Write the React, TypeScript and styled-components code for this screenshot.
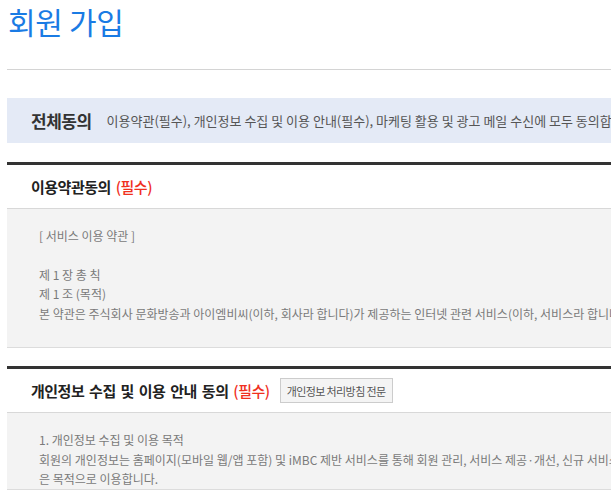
import React from 'react'
import styled, { createGlobalStyle } from 'styled-components'

const Global = createGlobalStyle`
  html, body { margin: 0; padding: 0; background: #fff; overflow: hidden; }
  body { font-family: "Noto Sans CJK KR", "Noto Sans", sans-serif; }
`

const Page = styled.div`
  width: 960px;
  padding-left: 7px;
`

const Title = styled.h1`
  margin: 0;
  padding: 0 0 0 1px;
  font-size: 30px;
  line-height: 42px;
  font-weight: 400;
  color: #1a7be4;
  letter-spacing: -0.3px;
`

const Rule = styled.hr`
  margin: 27px 0 0;
  border: 0;
  border-top: 1px solid #d4d4d4;
`

const AllAgree = styled.div`
  margin-top: 28px;
  height: 45px;
  display: flex;
  align-items: center;
  gap: 15px;
  padding-left: 24px;
  background: #e4eaf6;
  white-space: nowrap;
`

const AllLabel = styled.strong`
  font-size: 17px;
  font-weight: 700;
  color: #333;
  letter-spacing: -0.5px;
`

const AllText = styled.span`
  font-size: 13px;
  color: #555;
  letter-spacing: 0;
`

const Section = styled.section<{ $gap: number }>`
  margin-top: ${p => p.$gap}px;
  border-top: 3px solid #333;
`

const Head = styled.div`
  height: 43px;
  display: flex;
  align-items: center;
  gap: 10px;
  padding-left: 24px;
  border-bottom: 1px solid #d8d8d8;
`

const HeadTitle = styled.h2`
  margin: 0;
  font-size: 15px;
  font-weight: 700;
  color: #222;
  letter-spacing: -0.5px;
  word-spacing: 2px;
`

const Req = styled.span`
  color: #f0301e;
  font-weight: 500;
`

const SmallButton = styled.button`
  height: 25px;
  padding: 0 6px;
  border: 1px solid #ccc;
  background: #f4f4f4;
  color: #555;
  font-family: inherit;
  font-size: 11px;
  letter-spacing: -0.6px;
  cursor: pointer;
`

const Body = styled.div<{ $pt: number; $h?: number }>`
  background: #f3f3f3;
  padding: ${p => p.$pt}px 0 0 32px;
  height: ${p => (p.$h ? `${p.$h}px` : 'auto')};
  box-sizing: border-box;
  border-bottom: 1px solid #dcdcdc;
  font-size: 12px;
  line-height: 19.5px;
  color: #7a7a7a;
  letter-spacing: 0;
  white-space: nowrap;
`

const Line = styled.p`
  margin: 0;
  min-height: 19px;
`

export default function App() {
  return (
    <Page>
      <Global />
      <Title>회원 가입</Title>
      <Rule />
      <AllAgree>
        <AllLabel>전체동의</AllLabel>
        <AllText>
          이용약관(필수), 개인정보 수집 및 이용 안내(필수), 마케팅 활용 및 광고 메일 수신에 모두 동의합니다.
        </AllText>
      </AllAgree>

      <Section $gap={19}>
        <Head>
          <HeadTitle>
            이용약관동의 <Req>(필수)</Req>
          </HeadTitle>
        </Head>
        <Body $pt={17} $h={139}>
          <Line>[ 서비스 이용 약관 ]</Line>
          <Line />
          <Line>제 1 장 총 칙</Line>
          <Line>제 1 조 (목적)</Line>
          <Line>
            본 약관은 주식회사 문화방송과 아이엠비씨(이하, 회사라 합니다)가 제공하는 인터넷 관련 서비스(이하, 서비스라 합니다)를 이용함에 있어
          </Line>
        </Body>
      </Section>

      <Section $gap={18}>
        <Head>
          <HeadTitle>
            개인정보 수집 및 이용 안내 동의 <Req>(필수)</Req>
          </HeadTitle>
          <SmallButton>개인정보 처리방침 전문</SmallButton>
        </Head>
        <Body $pt={17}>
          <Line>1. 개인정보 수집 및 이용 목적</Line>
          <Line>
            회원의 개인정보는 홈페이지(모바일 웹/앱 포함) 및 iMBC 제반 서비스를 통해 회원 관리, 서비스 제공·개선, 신규 서비스 개발 등 다음과 같
          </Line>
          <Line>은 목적으로 이용합니다.</Line>
        </Body>
      </Section>
    </Page>
  )
}
